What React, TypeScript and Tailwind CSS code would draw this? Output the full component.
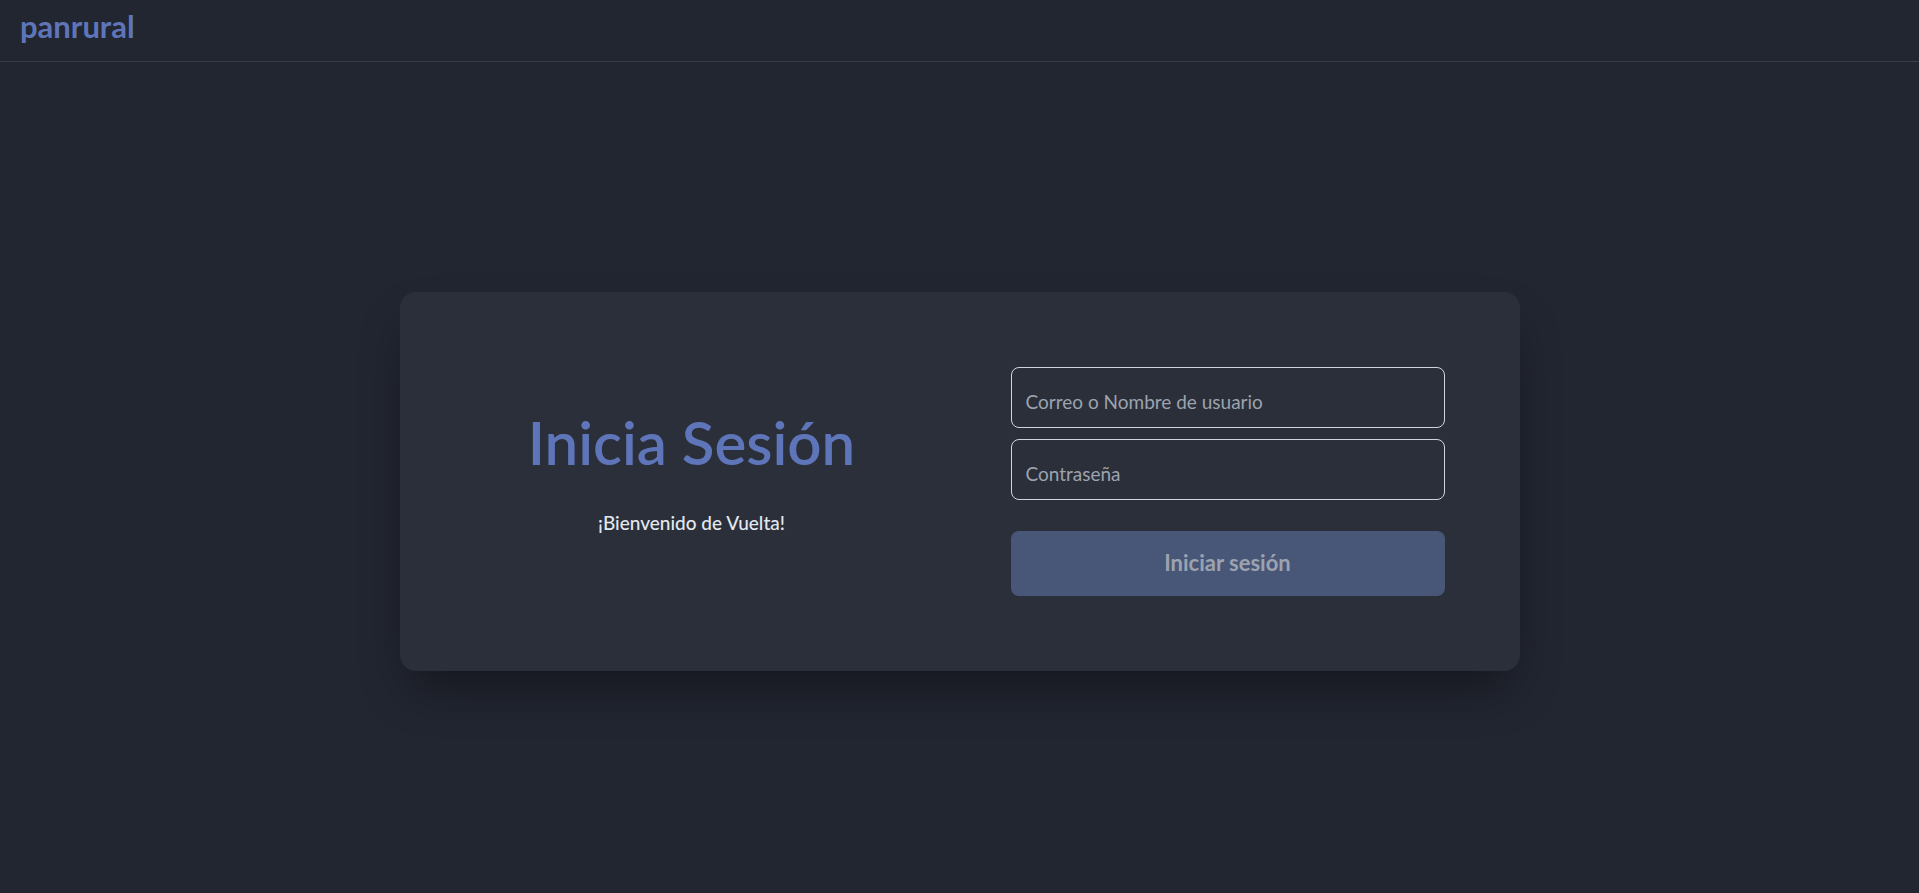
export default function App() {
    return (
        <div className="min-h-screen flex flex-col bg-[#222631] font-['Lato',sans-serif]">
            <header className="h-[62px] flex items-center px-[20px] border-b border-[#393d48]">
                <h1 className="text-[31px] font-bold text-[#5e76b9] leading-none -mt-[8px]">panrural</h1>
            </header>
            <main className="flex-1 flex items-center justify-center pt-[8px]">
                <div className="w-[1120px] bg-[#2b2f3a] rounded-2xl p-[75px] grid grid-cols-2 gap-[102px] shadow-[0_25px_50px_-12px_rgba(0,0,0,0.45)]">
                    <div className="flex flex-col items-center justify-center pb-[14px]">
                        <h2 className="text-[60px] font-semibold text-[#5e76b9] leading-none">Inicia Sesión</h2>
                        <p className="text-[19px] font-medium text-[#e2e8f0] mt-[37px]">¡Bienvenido de Vuelta!</p>
                    </div>
                    <form className="flex flex-col">
                        <input
                            type="text"
                            placeholder="Correo o Nombre de usuario"
                            className="h-[61px] rounded-lg border border-[#d1d5db] bg-transparent px-[14px] pt-[8px] text-[19px] text-white placeholder:text-[#9ca3af] outline-none"
                        />
                        <input
                            type="password"
                            placeholder="Contraseña"
                            className="h-[61px] mt-[11px] rounded-lg border border-[#d1d5db] bg-transparent px-[14px] pt-[8px] text-[19px] text-white placeholder:text-[#9ca3af] outline-none"
                        />
                        <button
                            type="button"
                            className="h-[65px] mt-[31px] rounded-lg bg-[#485678] text-[22px] font-bold text-[#9ca3af] pb-[2px]"
                        >
                            Iniciar sesión
                        </button>
                    </form>
                </div>
            </main>
        </div>
    )
}
